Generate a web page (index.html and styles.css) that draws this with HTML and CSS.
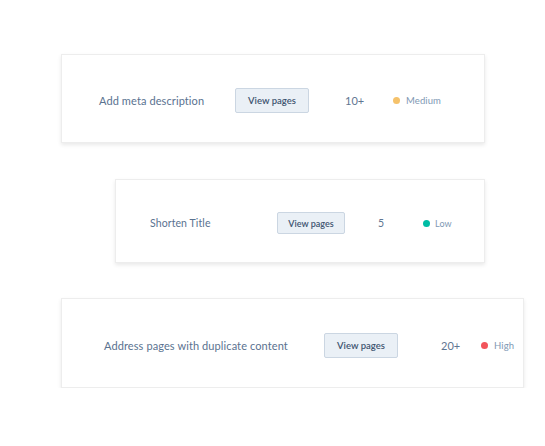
FILE: index.html
```html
<!DOCTYPE html>
<html>
<head>
<meta charset="utf-8">
<link rel="stylesheet" href="styles.css">
</head>
<body>
<div class="stack">
  <div class="card card-meta">
    <span class="label">Add meta description</span>
    <button class="btn">View pages</button>
    <span class="count">10+</span>
    <span class="status"><span class="dot dot-medium"></span>Medium</span>
  </div>
  <div class="card card-title">
    <span class="label">Shorten Title</span>
    <button class="btn">View pages</button>
    <span class="count">5</span>
    <span class="status"><span class="dot dot-low"></span>Low</span>
  </div>
  <div class="card card-dup">
    <span class="label">Address pages with duplicate content</span>
    <button class="btn">View pages</button>
    <span class="count">20+</span>
    <span class="status"><span class="dot dot-high"></span>High</span>
  </div>
</div>
</body>
</html>
```
FILE: styles.css
```css
html, body {
  margin: 0;
  padding: 0;
  background: #ffffff;
}
body {
  font-family: Lato, "Open Sans", "Liberation Sans", sans-serif;
  color: #5a7290;
}
.stack {
  display: flex;
  flex-direction: column;
  align-items: flex-start;
  padding-top: 54px;
}
.card {
  box-sizing: border-box;
  display: flex;
  align-items: center;
  background: #fff;
  border: 1px solid #ededed;
  box-shadow: 0 2px 4px rgba(0, 0, 0, 0.09);
  padding-top: 4px;
}
.label {
  flex: none;
  font-size: 11px;
  letter-spacing: 0.1px;
  color: #5a7290;
  white-space: nowrap;
}
.btn {
  flex: none;
  box-sizing: border-box;
  background: #eaf0f6;
  border: 1px solid #cbd6e2;
  border-radius: 2px;
  color: #3e5571;
  font-family: Lato, "Open Sans", "Liberation Sans", sans-serif;
  font-weight: 600;
  font-size: 9.5px;
  padding: 0;
}
.count {
  flex: none;
  font-size: 11px;
  color: #5f7692;
}
.status {
  display: flex;
  align-items: center;
  font-size: 9.5px;
  letter-spacing: 0.1px;
  color: #8098b4;
}
.dot {
  border-radius: 50%;
  margin-right: 6px;
}
.dot-medium { background: #f5c26b; }
.dot-low { background: #00bda5; }
.dot-high { background: #f2545b; }

/* card 1 */
.card-meta {
  margin-left: 61px;
  width: 424px;
  height: 89px;
  padding-left: 37px;
}
.card-meta .label { width: 136px; }
.card-meta .btn { width: 74px; height: 25px; }
.card-meta .count { margin-left: 36px; width: 48px; }
.card-meta .dot { width: 7px; height: 7px; }

/* card 2 */
.card-title {
  margin-top: 36px;
  margin-left: 115px;
  width: 370px;
  height: 84px;
  padding-left: 34px;
}
.card-title .label { width: 127px; font-size: 10.5px; }
.card-title .btn { width: 68px; height: 22px; font-size: 9px; }
.card-title .count { margin-left: 33px; width: 45px; font-size: 10.5px; }
.card-title .status { font-size: 9px; }
.card-title .dot { width: 7px; height: 7px; margin-right: 5px; }

/* card 3 */
.card-dup {
  margin-top: 35px;
  margin-left: 61px;
  width: 463px;
  height: 90px;
  padding-left: 42px;
  padding-top: 5px;
}
.card-dup .label { width: 220px; }
.card-dup .btn { width: 74px; height: 25px; }
.card-dup .count { margin-left: 43px; width: 40px; }
.card-dup .dot { width: 7px; height: 7px; }
```
